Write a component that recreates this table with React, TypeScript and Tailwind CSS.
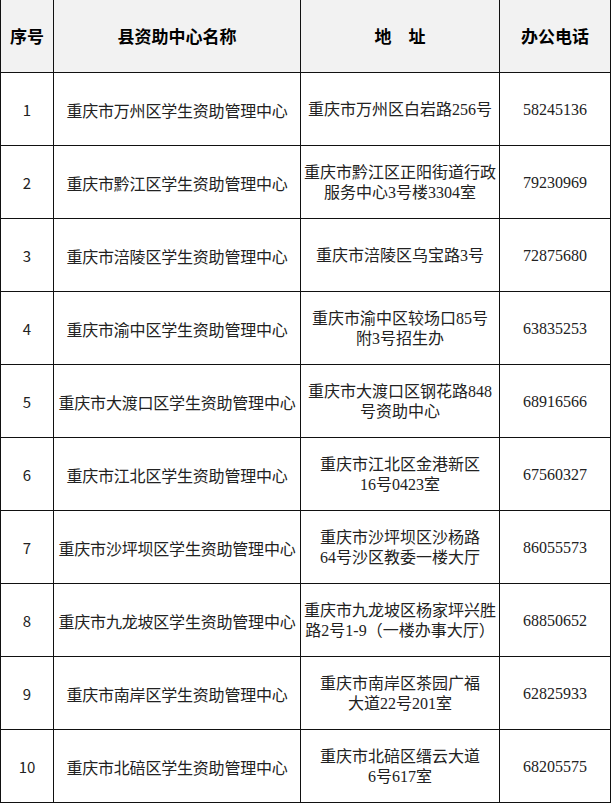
import React from "react";

type Row = { n: string; name: string; addr: string[]; tel: string };

const rows: Row[] = [
  { n: "1", name: "重庆市万州区学生资助管理中心", addr: ["重庆市万州区白岩路256号"], tel: "58245136" },
  { n: "2", name: "重庆市黔江区学生资助管理中心", addr: ["重庆市黔江区正阳街道行政", "服务中心3号楼3304室"], tel: "79230969" },
  { n: "3", name: "重庆市涪陵区学生资助管理中心", addr: ["重庆市涪陵区乌宝路3号"], tel: "72875680" },
  { n: "4", name: "重庆市渝中区学生资助管理中心", addr: ["重庆市渝中区较场口85号", "附3号招生办"], tel: "63835253" },
  { n: "5", name: "重庆市大渡口区学生资助管理中心", addr: ["重庆市大渡口区钢花路848", "号资助中心"], tel: "68916566" },
  { n: "6", name: "重庆市江北区学生资助管理中心", addr: ["重庆市江北区金港新区", "16号0423室"], tel: "67560327" },
  { n: "7", name: "重庆市沙坪坝区学生资助管理中心", addr: ["重庆市沙坪坝区沙杨路", "64号沙区教委一楼大厅"], tel: "86055573" },
  { n: "8", name: "重庆市九龙坡区学生资助管理中心", addr: ["重庆市九龙坡区杨家坪兴胜", "路2号1-9（一楼办事大厅）"], tel: "68850652" },
  { n: "9", name: "重庆市南岸区学生资助管理中心", addr: ["重庆市南岸区茶园广福", "大道22号201室"], tel: "62825933" },
  { n: "10", name: "重庆市北碚区学生资助管理中心", addr: ["重庆市北碚区缙云大道", "6号617室"], tel: "68205575" },
];

const cell = "flex items-center justify-center text-center border-r border-b border-[#111] h-[73px]";
const head = `${cell} bg-[#f2f2f2] font-bold text-[17px] text-black font-['Noto_Sans_CJK_SC',sans-serif]`;
const sans = "font-['Noto_Sans_CJK_SC',sans-serif]";
const serif = "font-['Liberation_Serif','Noto_Sans_CJK_SC',serif]";

export default function App() {
  return (
    <div className="w-[611px] h-[803px] overflow-hidden bg-white">
      <div className="grid grid-cols-[53px_247px_199px_111px] w-[610px] border-l border-[#111]">
        <div className={head}>序号</div>
        <div className={head}>县资助中心名称</div>
        <div className={`${head} whitespace-pre`}>地　址</div>
        <div className={head}>办公电话</div>
        {rows.map((r) => (
          <React.Fragment key={r.n}>
            <div className={`${cell} ${sans} text-[15px] text-[#222] pt-[3px]`}>{r.n}</div>
            <div className={`${cell} ${sans} text-[16px] text-[#222] whitespace-nowrap tracking-[-0.2px] pt-[2px]`}>{r.name}</div>
            <div className={`${cell} ${serif} flex-col text-[16px] leading-[20px] text-[#222] whitespace-nowrap pt-[2px]`}>
              {r.addr.map((a, i) => (
                <span key={i}>{a}</span>
              ))}
            </div>
            <div className={`${cell} ${serif} text-[16px] text-[#222] pt-[2px]`}>{r.tel}</div>
          </React.Fragment>
        ))}
      </div>
    </div>
  );
}
